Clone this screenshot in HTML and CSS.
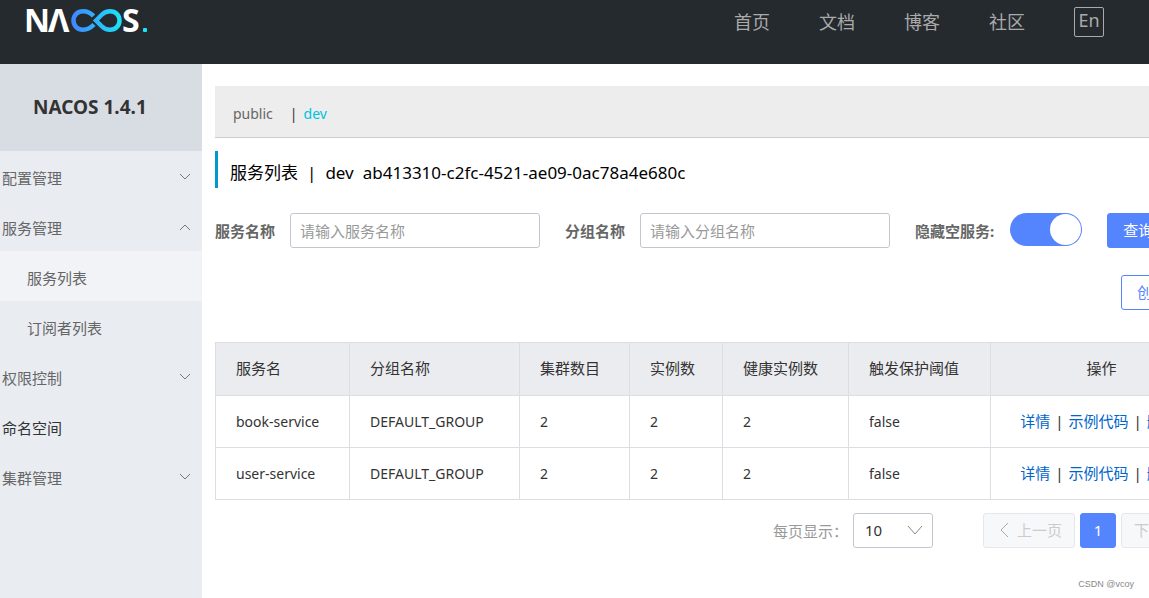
FILE: index.html
```html
<!DOCTYPE html>
<html lang="zh-CN">
<head>
<meta charset="utf-8">
<title>Nacos</title>
<link rel="stylesheet" href="styles.css">
</head>
<body>
<header class="topbar">
  <a class="logo" href="#" aria-label="Nacos">
    <svg width="124" height="32" viewBox="0 0 124 32">
      <defs>
        <linearGradient id="loop" gradientUnits="userSpaceOnUse" x1="46" y1="0" x2="97" y2="0">
          <stop offset="0" stop-color="#3f87ff"/>
          <stop offset="1" stop-color="#1be6f6"/>
        </linearGradient>
      </defs>
      <g class="logo-text">
        <text x="-2" y="24">N</text>
        <text x="22" y="24">Λ</text>
        <text x="96" y="24">S</text>
      </g>
      <g fill="none" stroke="url(#loop)" stroke-width="4.500">
        <path d="M67.500 8C64.500 4.500 61 3.200 57 3.200C51.500 3.200 47.500 7 47.500 12.500C47.500 18 51.500 21.800 57 21.800C61 21.800 64.500 20 68 16.500"/>
        <path d="M70 12.500L76 6.500C78.500 4 81 3.200 84 3.200C89.500 3.200 93.500 7 93.500 12.500C93.500 18 89.500 21.800 84 21.800C81 21.800 78.500 21 76 18.500Z"/>
      </g>
      <rect x="117" y="20" width="4" height="4" rx="1" fill="#1be6f6"/>
    </svg>
  </a>
  <nav class="topnav">
    <a href="#">首页</a>
    <a href="#">文档</a>
    <a href="#">博客</a>
    <a href="#">社区</a>
    <button class="lang" type="button">En</button>
  </nav>
</header>
<div class="layout">
  <aside class="sidebar">
    <h1 class="product">NACOS 1.4.1</h1>
    <nav class="menu">
      <a class="item" href="#">配置管理<svg class="arrow" viewBox="0 0 12 8"><path d="M1 1l5 5 5-5"/></svg></a>
      <a class="item" href="#">服务管理<svg class="arrow" viewBox="0 0 12 8"><path d="M1 7l5-5 5 5"/></svg></a>
      <a class="item sub active" href="#">服务列表</a>
      <a class="item sub" href="#">订阅者列表</a>
      <a class="item" href="#">权限控制<svg class="arrow" viewBox="0 0 12 8"><path d="M1 1l5 5 5-5"/></svg></a>
      <a class="item plain" href="#">命名空间</a>
      <a class="item" href="#">集群管理<svg class="arrow" viewBox="0 0 12 8"><path d="M1 1l5 5 5-5"/></svg></a>
    </nav>
  </aside>
  <main class="main">
    <div class="content">
      <div class="namespaces">
        <a href="#">public</a>
        <span class="bar">|</span>
        <a class="current" href="#">dev</a>
      </div>
      <h2 class="title"><span>服务列表</span><span>|</span><span>dev</span><span>ab413310-c2fc-4521-ae09-0ac78a4e680c</span></h2>
      <form class="filters">
        <label for="service">服务名称</label>
        <input class="text" id="service" type="text" placeholder="请输入服务名称">
        <label for="group">分组名称</label>
        <input class="text" id="group" type="text" placeholder="请输入分组名称">
        <label for="hide">隐藏空服务:</label>
        <input class="switch" id="hide" type="checkbox" checked>
        <button class="btn primary" type="button">查询</button>
      </form>
      <div class="actions"><button class="btn outline" type="button">创建服务</button></div>
      <table class="services">
        <colgroup><col class="c1"><col class="c2"><col class="c3"><col class="c4"><col class="c5"><col class="c6"><col></colgroup>
        <thead>
          <tr><th>服务名</th><th>分组名称</th><th>集群数目</th><th>实例数</th><th>健康实例数</th><th>触发保护阈值</th><th class="ops">操作</th></tr>
        </thead>
        <tbody>
          <tr><td>book-service</td><td>DEFAULT_GROUP</td><td>2</td><td>2</td><td>2</td><td>false</td>
            <td class="ops"><a href="#">详情</a><i>|</i><a href="#">示例代码</a><i>|</i><a href="#">删除</a></td></tr>
          <tr><td>user-service</td><td>DEFAULT_GROUP</td><td>2</td><td>2</td><td>2</td><td>false</td>
            <td class="ops"><a href="#">详情</a><i>|</i><a href="#">示例代码</a><i>|</i><a href="#">删除</a></td></tr>
        </tbody>
      </table>
      <div class="pagination">
        <label for="size">每页显示：</label>
        <span class="select">
          <select id="size"><option>10</option><option>20</option></select>
          <svg viewBox="0 0 16 10"><path d="M1 1l7 8 7-8"/></svg>
        </span>
        <button class="page" type="button" disabled><svg viewBox="0 0 10 16"><path d="M9 1L2 8l7 7"/></svg>上一页</button>
        <button class="page on" type="button">1</button>
        <button class="page" type="button" disabled>下一页<svg viewBox="0 0 10 16"><path d="M1 1l7 7-7 7"/></svg></button>
      </div>
    </div>
    <footer class="credit">CSDN @vcoy</footer>
  </main>
</div>
</body>
</html>
```
FILE: styles.css
```css
* { box-sizing: border-box; }
body {
  margin: 0;
  min-height: 100vh;
  display: flex;
  flex-direction: column;
  overflow: hidden;
  background: #fff;
  color: #333;
  font: 15px/24px "Noto Sans", "Noto Sans CJK SC", sans-serif;
}
a { color: inherit; text-decoration: none; }
button, input, select { font: inherit; }

.topbar {
  display: flex;
  justify-content: space-between;
  align-items: flex-start;
  height: 64px;
  padding: 7px 45px 0 26px;
  background: #252a2f;
}
.logo svg { display: block; margin-top: 1px; overflow: visible; }
.logo-text {
  fill: #fff;
  font: 700 32px "Noto Sans", sans-serif;
}
.topnav {
  display: flex;
  align-items: center;
  gap: 49px;
  color: #aaa;
  font-size: 18px;
}
.lang {
  width: 30px;
  height: 30px;
  padding: 0 0 4px;
  border: 1px solid #aaa;
  border-radius: 2px;
  background: none;
  color: #aaa;
  line-height: 24px;
}

.layout { flex: 1; display: flex; }
.sidebar { flex: 0 0 202px; background: #e9edf2; }
.product {
  margin: 0;
  padding: 0 0 0 33px;
  background: #d8dde4;
  font-size: 19px;
  line-height: 87px;
}
.menu { color: #666; }
.item {
  display: flex;
  align-items: center;
  justify-content: space-between;
  height: 50px;
  padding: 4px 11px 0 2px;
}
.item.sub { padding-left: 27px; }
.item.active { background: #f1f3f7; }
.item.plain { color: #333; }
.arrow {
  width: 12px;
  height: 8px;
  margin-bottom: 2px;
  fill: none;
  stroke: #777;
}

.main { flex: 1; min-width: 0; padding: 22px 13px 0; }
.content { min-width: 998px; }
.namespaces {
  display: flex;
  align-items: center;
  height: 52px;
  padding: 4px 18px 0;
  border-bottom: 1px solid #ccc;
  background: #ededed;
  color: #666;
  font-size: 14px;
}
.bar { padding: 0 6px 0 17px; color: #333; }
.current { color: #00c1de; }
.title {
  display: flex;
  gap: 9px;
  margin: 13px 0 0;
  padding: 7px 0 0 12px;
  border-left: 3px solid #09c;
  color: #000;
  font-size: 17px;
  font-weight: 400;
  line-height: 30px;
}
.filters {
  display: flex;
  align-items: center;
  margin-top: 25px;
}
.filters label { color: #666; font-weight: 700; white-space: nowrap; }
.text {
  width: 250px;
  height: 35px;
  margin: 0 25px 0 15px;
  padding: 0 9px;
  border: 1px solid #c4c6cf;
  border-radius: 3px;
}
.text::placeholder { color: #999; }
.switch {
  appearance: none;
  display: flex;
  justify-content: flex-end;
  width: 72px;
  height: 33px;
  margin: 0 25px 2px 16px;
  padding: 1px;
  border-radius: 17px;
  background: #5584ff;
}
.switch::before {
  content: "";
  width: 31px;
  border-radius: 50%;
  background: #fff;
}
.btn {
  height: 35px;
  padding: 0 15px 2px;
  border: 1px solid #5584ff;
  border-radius: 3px;
  white-space: nowrap;
}
.primary { background: #5584ff; color: #fff; }
.outline { background: #fff; color: #5584ff; }
.actions { display: flex; justify-content: flex-end; margin-top: 27px; }

.services {
  width: 100%;
  margin-top: 32px;
  border-collapse: collapse;
  table-layout: fixed;
}
.c1 { width: 134px; }
.c2 { width: 170px; }
.c3 { width: 110px; }
.c4 { width: 93px; }
.c5 { width: 126px; }
.c6 { width: 142px; }
.services th, .services td {
  height: 52px;
  padding: 0 0 2px 20px;
  border: 1px solid #dcdee3;
  font-weight: 400;
  text-align: left;
  white-space: nowrap;
}
.services th { height: 53px; background: #ebecf0; }
.services td { padding-bottom: 0; font-size: 14px; }
.services .ops { padding: 0 0 2px; font-size: 15px; text-align: center; }
.services td.ops { padding-right: 6px; }
.services td a { color: #06c; }
.services i { padding: 0 5px; font-style: normal; }

.pagination {
  display: flex;
  align-items: center;
  justify-content: flex-end;
  gap: 5px;
  margin-top: 13px;
  color: #999;
}
.select { position: relative; margin-right: 45px; }
.select select {
  display: block;
  appearance: none;
  width: 80px;
  height: 35px;
  padding: 0 11px 2px;
  border: 1px solid #c4c6cf;
  border-radius: 3px;
  background: #fff;
  color: #333;
}
.select svg {
  position: absolute;
  top: 12px;
  right: 10px;
  width: 16px;
  height: 10px;
  fill: none;
  stroke: #888;
}
.page {
  display: flex;
  align-items: center;
  gap: 8px;
  height: 35px;
  padding: 0 12px 2px 15px;
  border: 1px solid #e6e7eb;
  border-radius: 3px;
  background: #f7f8fa;
  color: #ccc;
}
.page:last-child { padding: 0 15px 2px 12px; }
.page svg { width: 10px; height: 16px; fill: none; stroke: #aaa; }
.page.on {
  justify-content: center;
  width: 36px;
  padding: 0 0 2px;
  border-color: #5584ff;
  background: #5584ff;
  color: #fff;
}
.credit {
  margin-top: 26px;
  padding-right: 2px;
  color: #888;
  font: 9px/20px "Liberation Sans", Arial, sans-serif;
  text-align: right;
}
```
